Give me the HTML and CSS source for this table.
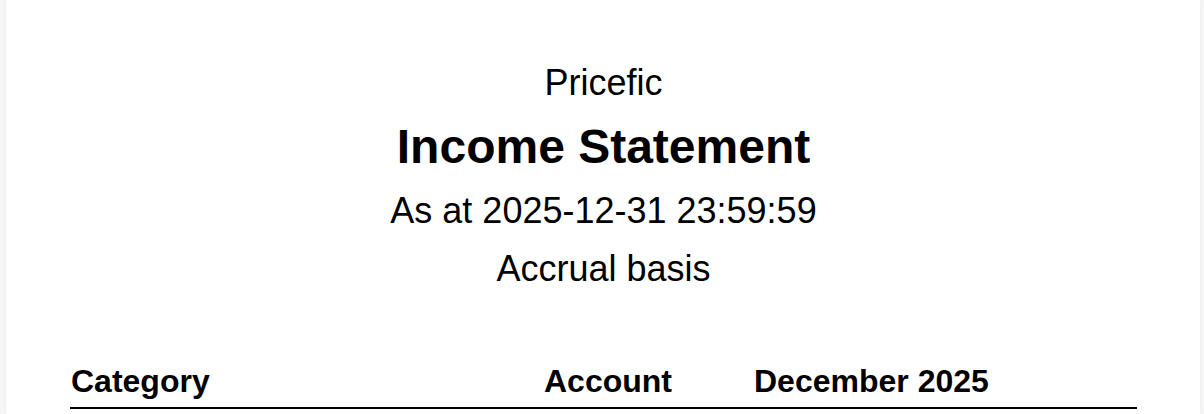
FILE: index.html
```html
<!DOCTYPE html>
<html lang="en">
<head>
<meta charset="utf-8">
<title>Income Statement</title>
<link rel="stylesheet" href="styles.css">
</head>
<body>
<main class="page">
  <header class="report-head">
    <div class="company">Pricefic</div>
    <h1 class="title">Income Statement</h1>
    <div class="subtitle">As at 2025-12-31 23:59:59</div>
    <div class="subtitle">Accrual basis</div>
  </header>
  <div class="report-table">
    <div class="thead">
      <div class="th th-category">Category</div>
      <div class="th th-account">Account</div>
      <div class="th th-period">December 2025</div>
    </div>
  </div>
</main>
</body>
</html>
```

FILE: styles.css
```css
html, body {
  margin: 0;
  padding: 0;
}

body {
  background: #f6f6f6;
  font-family: "Liberation Sans", Arial, Helvetica, sans-serif;
  color: #000;
  height: 414px;
  overflow: hidden;
}

.page {
  background: #fff;
  margin-left: 6px;
  width: 1194px;
  min-height: 414px;
  box-sizing: border-box;
  padding: 54px 63px 0 64px;
  box-shadow: 0 0 4px rgba(0, 0, 0, 0.05);
}

.report-head {
  text-align: center;
}

.company {
  font-size: 36px;
  line-height: 58px;
}

.title {
  margin: 0;
  font-size: 48px;
  font-weight: bold;
  line-height: 70px;
}

.subtitle {
  font-size: 36px;
  line-height: 58px;
}

.report-table {
  margin-top: 65px;
}

.thead {
  display: grid;
  grid-template-columns: 474px 210px 1fr;
  border-bottom: 2px solid #000;
  padding-bottom: 7px;
}

.th {
  font-size: 32px;
  font-weight: bold;
  line-height: 37px;
}

.th-category {
  padding-left: 1px;
}
```
